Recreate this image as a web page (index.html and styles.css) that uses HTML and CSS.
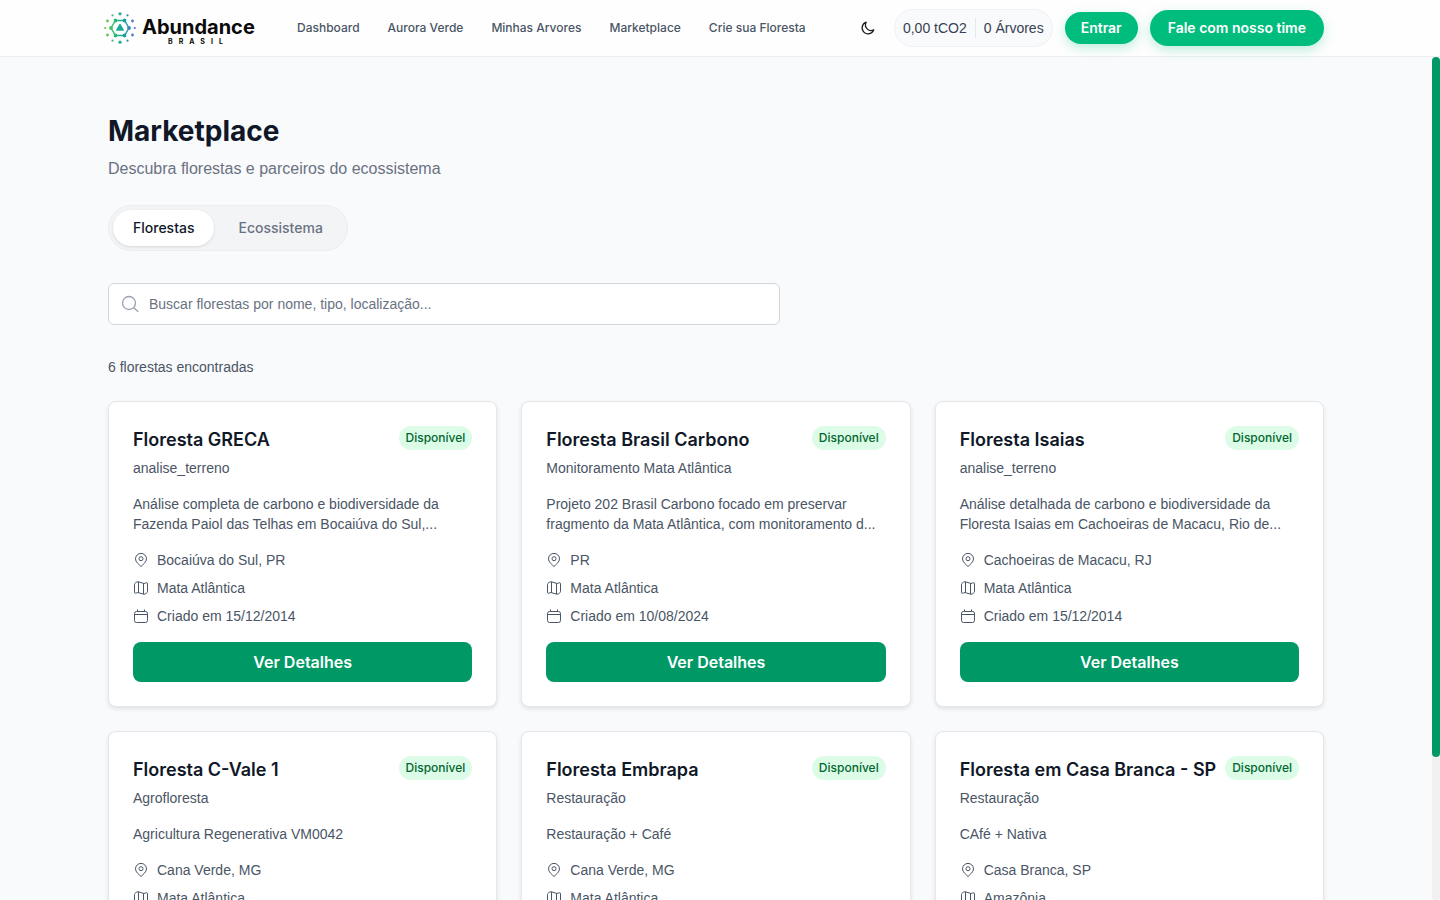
FILE: index.html
```html
<!DOCTYPE html>
<html lang="pt-BR">
<head>
    <meta charset="UTF-8">
    <meta name="viewport" content="width=device-width, initial-scale=1.0">
    <title>Marketplace - Abundance Brasil</title>
    <link rel="stylesheet" href="styles.css">
</head>
<body>
    <svg class="sprite" aria-hidden="true">
        <symbol id="pin" viewBox="0 0 16 16">
            <path d="M8 14.500C6.200 12.700 2.500 10 2.500 6.900a5.500 5.500 0 0 1 11 0C13.500 10 9.800 12.700 8 14.500z"/>
            <circle cx="8" cy="6.700" r="2"/>
        </symbol>
        <symbol id="map" viewBox="0 0 16 16">
            <path d="M1.500 4.500C1.500 3 3.500 2 5 1.700l6 1.800c1.500-.3 3.500-1.700 3.500.3v7.700c0 1.500-2 2.500-3.500 2.800l-6-1.800c-1.500.3-3.500 1.700-3.500-.3z"/>
            <path d="M5.500 2v10.500M10.500 3.500v10.500"/>
        </symbol>
        <symbol id="calendar" viewBox="0 0 16 16">
            <rect x="1.500" y="3.500" width="13" height="11" rx="2"/>
            <path d="M1.500 6.500h13M4.500 1.500v2M11.500 1.500v2"/>
        </symbol>
    </svg>

    <header class="header">
        <div class="header-inner">
            <a class="logo" href="#">
                <svg class="logo-mark" viewBox="0 0 32 32" aria-hidden="true">
                    <defs>
                        <linearGradient id="brand" gradientUnits="userSpaceOnUse" x1="0" y1="0" x2="32" y2="0">
                            <stop offset="0" stop-color="#7fc83f"/>
                            <stop offset=".3" stop-color="#2fbf71"/>
                            <stop offset=".65" stop-color="#189fa8"/>
                            <stop offset="1" stop-color="#6468d8"/>
                        </linearGradient>
                    </defs>
                    <path d="M11.500 8.500h9L25 16l-4.500 7.500h-9L7 16z" fill="none" stroke="url(#brand)" stroke-width="1.400"/>
                    <path d="M16 12.500l3.200 5.500h-6.400z" fill="#18a999" stroke="#18a999" stroke-width="1.400" stroke-linejoin="round"/>
                    <g fill="url(#brand)">
                        <circle cx="11.500" cy="8.500" r="1.900"/><circle cx="20.500" cy="8.500" r="1.900"/>
                        <circle cx="25" cy="16" r="1.900"/><circle cx="7" cy="16" r="1.900"/>
                        <circle cx="11.500" cy="23.500" r="1.900"/><circle cx="20.500" cy="23.500" r="1.900"/>
                        <circle cx="16" cy="1.800" r="1.600"/><circle cx="16" cy="30.200" r="1.600"/>
                        <circle cx="8.500" cy="3.300" r="1.100"/><circle cx="23.500" cy="3.300" r="1.100"/>
                        <circle cx="3.500" cy="9" r="1.400"/><circle cx="28.500" cy="9" r="1.400"/>
                        <circle cx="1.200" cy="16" r="1.100"/><circle cx="30.800" cy="16" r="1.100"/>
                        <circle cx="3.500" cy="23" r="1.400"/><circle cx="28.500" cy="23" r="1.400"/>
                        <circle cx="8.500" cy="28.700" r="1.100"/><circle cx="23.500" cy="28.700" r="1.100"/>
                    </g>
                </svg>
                <span class="logo-text">
                    <span class="logo-name">Abundance</span>
                    <span class="logo-sub">BRASIL</span>
                </span>
            </a>
            <nav class="nav">
                <a href="#">Dashboard</a>
                <a href="#">Aurora Verde</a>
                <a href="#">Minhas Arvores</a>
                <a href="#">Marketplace</a>
                <a href="#">Crie sua Floresta</a>
            </nav>
            <div class="actions">
                <button class="theme-btn" type="button" aria-label="Alternar tema">
                    <svg viewBox="0 0 16 16"><path d="M6.200 2.200a6 6 0 1 0 7.600 7.600A5.600 5.600 0 0 1 6.200 2.200z"/></svg>
                </button>
                <div class="stats">
                    <span>0,00 tCO2</span>
                    <span>0 Árvores</span>
                </div>
                <button class="btn-pill" type="button">Entrar</button>
                <button class="btn-pill btn-large" type="button">Fale com nosso time</button>
            </div>
        </div>
    </header>

    <div class="page">
        <main class="main">
            <div class="container">
                <h1>Marketplace</h1>
                <p class="subtitle">Descubra florestas e parceiros do ecossistema</p>

                <div class="tabs">
                    <button class="tab active" type="button">Florestas</button>
                    <button class="tab" type="button">Ecossistema</button>
                </div>

                <label class="search">
                    <svg viewBox="0 0 20 20" aria-hidden="true"><circle cx="8" cy="9" r="6.500"/><path d="M12.700 13.700l4.500 4"/></svg>
                    <input type="text" aria-label="Buscar florestas" placeholder="Buscar florestas por nome, tipo, localização...">
                </label>

                <p class="count">6 florestas encontradas</p>

                <div class="grid">
                    <article class="card">
                        <div class="card-head">
                            <h3>Floresta GRECA</h3>
                            <span class="badge">Disponível</span>
                        </div>
                        <p class="type">analise_terreno</p>
                        <p class="desc">Análise completa de carbono e biodiversidade da Fazenda Paiol das Telhas em Bocaiúva do Sul,...</p>
                        <ul class="meta">
                            <li><svg><use href="#pin"/></svg>Bocaiúva do Sul, PR</li>
                            <li><svg><use href="#map"/></svg>Mata Atlântica</li>
                            <li><svg><use href="#calendar"/></svg>Criado em 15/12/2014</li>
                        </ul>
                        <button class="details" type="button">Ver Detalhes</button>
                    </article>

                    <article class="card">
                        <div class="card-head">
                            <h3>Floresta Brasil Carbono</h3>
                            <span class="badge">Disponível</span>
                        </div>
                        <p class="type">Monitoramento Mata Atlântica</p>
                        <p class="desc">Projeto 202 Brasil Carbono focado em preservar fragmento da Mata Atlântica, com monitoramento d...</p>
                        <ul class="meta">
                            <li><svg><use href="#pin"/></svg>PR</li>
                            <li><svg><use href="#map"/></svg>Mata Atlântica</li>
                            <li><svg><use href="#calendar"/></svg>Criado em 10/08/2024</li>
                        </ul>
                        <button class="details" type="button">Ver Detalhes</button>
                    </article>

                    <article class="card">
                        <div class="card-head">
                            <h3>Floresta Isaias</h3>
                            <span class="badge">Disponível</span>
                        </div>
                        <p class="type">analise_terreno</p>
                        <p class="desc">Análise detalhada de carbono e biodiversidade da Floresta Isaias em Cachoeiras de Macacu, Rio de...</p>
                        <ul class="meta">
                            <li><svg><use href="#pin"/></svg>Cachoeiras de Macacu, RJ</li>
                            <li><svg><use href="#map"/></svg>Mata Atlântica</li>
                            <li><svg><use href="#calendar"/></svg>Criado em 15/12/2014</li>
                        </ul>
                        <button class="details" type="button">Ver Detalhes</button>
                    </article>

                    <article class="card">
                        <div class="card-head">
                            <h3>Floresta C-Vale 1</h3>
                            <span class="badge">Disponível</span>
                        </div>
                        <p class="type">Agrofloresta</p>
                        <p class="desc">Agricultura Regenerativa VM0042</p>
                        <ul class="meta">
                            <li><svg><use href="#pin"/></svg>Cana Verde, MG</li>
                            <li><svg><use href="#map"/></svg>Mata Atlântica</li>
                            <li><svg><use href="#calendar"/></svg>Criado em 15/12/2014</li>
                        </ul>
                        <button class="details" type="button">Ver Detalhes</button>
                    </article>

                    <article class="card">
                        <div class="card-head">
                            <h3>Floresta Embrapa</h3>
                            <span class="badge">Disponível</span>
                        </div>
                        <p class="type">Restauração</p>
                        <p class="desc">Restauração + Café</p>
                        <ul class="meta">
                            <li><svg><use href="#pin"/></svg>Cana Verde, MG</li>
                            <li><svg><use href="#map"/></svg>Mata Atlântica</li>
                            <li><svg><use href="#calendar"/></svg>Criado em 15/12/2014</li>
                        </ul>
                        <button class="details" type="button">Ver Detalhes</button>
                    </article>

                    <article class="card">
                        <div class="card-head">
                            <h3>Floresta em Casa Branca - SP</h3>
                            <span class="badge">Disponível</span>
                        </div>
                        <p class="type">Restauração</p>
                        <p class="desc">CAfé + Nativa</p>
                        <ul class="meta">
                            <li><svg><use href="#pin"/></svg>Casa Branca, SP</li>
                            <li><svg><use href="#map"/></svg>Amazônia</li>
                            <li><svg><use href="#calendar"/></svg>Criado em 15/12/2014</li>
                        </ul>
                        <button class="details" type="button">Ver Detalhes</button>
                    </article>
                </div>
            </div>
        </main>
        <div class="scrollbar" aria-hidden="true">
            <div class="thumb"></div>
        </div>
    </div>
</body>
</html>
```
FILE: styles.css
```css
* {
    box-sizing: border-box;
    margin: 0;
    padding: 0;
}
body {
    display: flex;
    flex-direction: column;
    height: 100vh;
    font-family: "Liberation Sans", Arial, sans-serif;
    font-size: 14px;
    line-height: 20px;
    color: #4a5565;
    background-color: #f9fafc;
}
button, input {
    font: inherit;
}
button {
    border: none;
    cursor: pointer;
}
a {
    color: inherit;
    text-decoration: none;
}
svg {
    flex-shrink: 0;
    fill: none;
    stroke: currentColor;
}
h1, h3, .nav, .tab, .badge, .btn-pill, .details, .logo {
    font-family: Inter, sans-serif;
}
.sprite {
    position: absolute;
    width: 0;
    height: 0;
}

/* header */
.header {
    position: relative;
    z-index: 1;
    flex-shrink: 0;
    padding-right: 8px;
    background-color: #fefefe;
    border-bottom: 1px solid #eceef0;
}
.header-inner {
    display: flex;
    align-items: center;
    max-width: 1224px;
    height: 56px;
    margin: 0 auto;
    padding-right: 4px;
}
.logo {
    display: flex;
    align-items: center;
    gap: 6px;
    width: 193px;
    color: #0a0a0a;
}
.logo-mark {
    width: 32px;
    height: 32px;
    stroke: none;
}
.logo-text {
    display: flex;
    flex-direction: column;
    padding-top: 6px;
}
.logo-name {
    font-size: 20px;
    font-weight: 700;
    line-height: 22px;
}
.logo-sub {
    padding-left: 26px;
    font-size: 7px;
    font-weight: 700;
    line-height: 8px;
    letter-spacing: 6px;
}
.nav {
    display: flex;
    gap: 28px;
    font-size: 12px;
    font-weight: 500;
    line-height: 16px;
    white-space: nowrap;
}
.actions {
    display: flex;
    align-items: center;
    gap: 12px;
    margin-left: auto;
    white-space: nowrap;
}
.theme-btn {
    display: flex;
    padding: 8px 6px;
    background: none;
    color: #1e1e1e;
}
.theme-btn svg {
    width: 16px;
    height: 16px;
    stroke-width: 1.3;
    stroke-linejoin: round;
}
.stats {
    display: flex;
    align-items: center;
    padding: 8px;
    border: 1px solid #f0f1f4;
    border-radius: 20px;
    background-color: #f9fafc;
    color: #364153;
}
.stats span + span {
    margin-left: 8px;
    padding-left: 8px;
    border-left: 1px solid #e5e7eb;
}
.btn-pill {
    padding: 6px 16px;
    border-radius: 20px;
    background-color: #00bc7d;
    color: #fff;
    font-weight: 600;
    box-shadow: 0 4px 12px rgba(0,188,125,0.25);
}
.btn-large {
    padding: 8px 18px;
}

/* page */
.page {
    display: flex;
    flex: 1;
    min-height: 0;
}
.main {
    flex: 1;
    overflow-y: auto;
    scrollbar-width: none;
}
.scrollbar {
    width: 8px;
    background-color: #f0f0f0;
    border-radius: 4px;
}
.thumb {
    height: 83%;
    background-color: #009966;
    border-radius: 4px;
}
.container {
    max-width: 1280px;
    margin: 0 auto;
    padding: 56px 32px;
}
h1 {
    color: #101828;
    font-size: 28px;
    font-weight: 700;
    line-height: 36px;
}
.subtitle {
    margin-top: 8px;
    color: #6a7282;
    font-size: 16px;
    line-height: 24px;
}
.tabs {
    display: flex;
    width: fit-content;
    gap: 4px;
    margin-top: 24px;
    padding: 4px;
    border: 1px solid #ebedf0;
    border-radius: 24px;
    background-color: #f3f4f6;
}
.tab {
    padding: 8px 20px;
    border-radius: 20px;
    background: none;
    color: #6a7282;
    font-weight: 500;
}
.tab.active {
    background-color: #fff;
    color: #101828;
    box-shadow: 0 1px 3px rgba(0,0,0,0.12);
}
.search {
    display: flex;
    align-items: center;
    gap: 8px;
    max-width: 672px;
    margin-top: 32px;
    padding: 0 12px;
    border: 1px solid #d1d5dc;
    border-radius: 6px;
    background-color: #fff;
    color: #99a1af;
}
.search svg {
    width: 20px;
    height: 20px;
    stroke-width: 1.3;
}
.search input {
    flex: 1;
    height: 40px;
    border: none;
    outline: none;
    background: none;
    color: #101828;
}
.search input::placeholder {
    color: #6a7282;
}
.count {
    margin-top: 32px;
}
.grid {
    display: grid;
    grid-template-columns: repeat(3, 1fr);
    gap: 24px;
    margin-top: 24px;
}

/* forest card */
.card {
    padding: 24px;
    border: 1px solid #e5e7eb;
    border-radius: 8px;
    background-color: #fff;
    box-shadow: 0 2px 4px rgba(0,0,0,0.1);
}
.card-head {
    display: flex;
    align-items: flex-start;
    justify-content: space-between;
}
.card h3 {
    color: #101828;
    font-size: 18px;
    font-weight: 600;
    line-height: 28px;
}
.badge {
    padding: 4px 7px;
    border-radius: 12px;
    background-color: #dcfce7;
    color: #016630;
    font-size: 12px;
    font-weight: 500;
    line-height: 16px;
}
.type {
    margin-top: 4px;
}
.desc {
    margin-top: 16px;
}
.meta {
    display: flex;
    flex-direction: column;
    gap: 8px;
    margin: 16px 0;
    list-style: none;
}
.meta li {
    display: flex;
    align-items: center;
    gap: 8px;
}
.meta svg {
    width: 16px;
    height: 16px;
}
.details {
    width: 100%;
    padding: 8px;
    border-radius: 8px;
    background-color: #009966;
    color: #fff;
    font-size: 16px;
    font-weight: 600;
    line-height: 24px;
}
```
